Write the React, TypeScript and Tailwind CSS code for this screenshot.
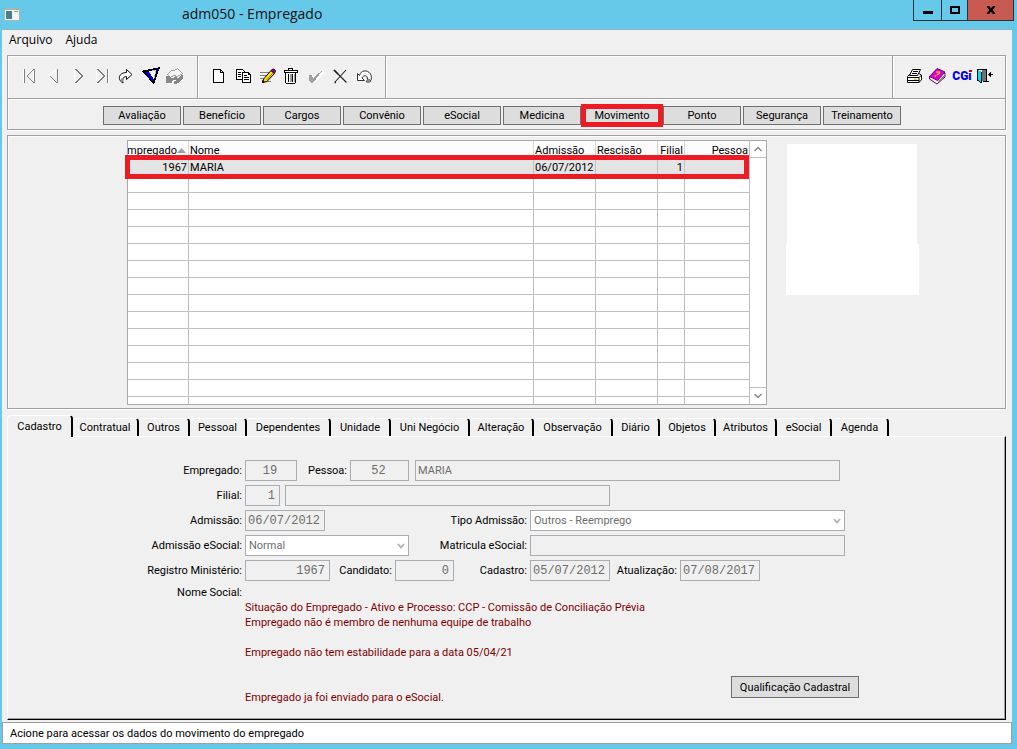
import { useId, type ReactNode } from "react";

const etched = "border border-[#a0a0a0] shadow-[1px_1px_0_#fff,inset_1px_1px_0_#fff]";

function ToolButton({ label, children }: { label: string; children: ReactNode }) {
  return (
    <button type="button" aria-label={label} className="relative flex h-6 w-6 items-center justify-center">
      {children}
    </button>
  );
}

function Glyph({ children }: { children: ReactNode }) {
  return (
    <svg viewBox="0 0 24 24" className="h-6 w-6" fill="none" shapeRendering="crispEdges" aria-hidden="true">
      {children}
    </svg>
  );
}

const navigation: { label: string; art: ReactNode }[] = [
  {
    label: "Primeiro",
    art: (
      <>
        <path d="M6.5 5v14M16.5 5l-7 7" stroke="#fff" />
        <path d="M7.5 5v14M17.5 5v14M10 12l7 7M17 5l-7 7" stroke="#808080" />
        <path d="M16.5 7v10" stroke="#fff" />
      </>
    ),
  },
  {
    label: "Anterior",
    art: (
      <>
        <path d="M15.5 5l-7 7" stroke="#fff" strokeWidth="2" />
        <path d="M16.5 5v14M9 12l7 7" stroke="#808080" />
      </>
    ),
  },
  {
    label: "Próximo",
    art: (
      <>
        <path d="M9.5 6v12l7-6" stroke="#fff" />
        <path d="M10.5 5l7 7-7 7" stroke="#808080" />
      </>
    ),
  },
  {
    label: "Último",
    art: (
      <>
        <path d="M7.5 6v12l7-6M19.5 5v14" stroke="#fff" />
        <path d="M8.5 5l7 7-7 7M18.5 5v14" stroke="#808080" />
      </>
    ),
  },
  {
    label: "Repetir",
    art: (
      <g shapeRendering="auto">
        <path d="M13.500 5.500l5.500 5-5.500 5v-3c-3 0-4.500 2-3.500 6.500-6-3-4.500-10.500 3.500-10.500z" fill="#fff" stroke="#111" />
        <path d="M8 14.500h2v3H8z" fill="#909090" />
      </g>
    ),
  },
  {
    label: "Filtrar",
    art: (
      <>
        <path d="M6.5 7.5l15-3-5 14z" fill="#fff" stroke="#000" strokeWidth="2" />
        <path d="M8 8h4l4 6v4z" fill="#0000e0" />
        <path d="M12 8.5h2M15 6.5h3M18.5 7v3M17.5 11v3" stroke="#a8b8c8" />
        <path d="M19 4h3v3h-3z" fill="#000080" />
      </>
    ),
  },
  {
    label: "Limpar filtro",
    art: (
      <>
        <path d="M6.500 10.500l4-4h3l3-2 5 5-5 3-4-1-3 2z" fill="#f6f6f6" stroke="#a0a0a0" />
        <path d="M5 12h3l3 2 3-1 3 1 3-3h2v4l-6 5h-3v-3h-2v2H5z" fill="#888" />
        <path d="M12 16.500h3M6 19.500h6M16 20.500l6-5" stroke="#fff" />
      </>
    ),
  },
];

const editing: { label: string; art: ReactNode }[] = [
  {
    label: "Novo",
    art: <path d="M7.5 5.5h7l3 3v10h-10zM14.5 5.5v3h3" fill="#fff" stroke="#000" />,
  },
  {
    label: "Copiar",
    art: (
      <>
        <path d="M6.5 5.5h6l2 2v8h-8z" fill="#fff" stroke="#000" />
        <path d="M8 8.5h3M8 10.5h3M8 12.5h3" stroke="#000" />
        <path d="M12.5 8.5h6l2 2v8h-8zM18.5 8.5v2h2" fill="#fff" stroke="#000" />
        <path d="M14 11.5h3M14 13.5h5M14 15.5h5" stroke="#000" />
      </>
    ),
  },
  {
    label: "Editar",
    art: (
      <>
        <path d="M6 8.5h10M6 11.5h8M6 14.5h5M8 17.5h9" stroke="#808080" />
        <g shapeRendering="auto">
          <path d="M8.500 18.500l1.500-4 7-8 3.500 3-7.500 8z" fill="#ffe000" stroke="#000" />
          <path d="M12.500 16l6-6.500" stroke="#808000" />
          <path d="M17 6.500l1.500-1.500h1.500l1.500 1.500v1.500L20 9.500z" fill="#900090" stroke="#000" strokeWidth="0.700" />
          <path d="M8 19v-3l3 2z" fill="#000" />
        </g>
      </>
    ),
  },
  {
    label: "Excluir",
    art: (
      <>
        <path d="M10.5 5.5v-1h4v1M6.5 6.5h13v2h-13z" fill="#fff" stroke="#000" />
        <path d="M7.5 8.5h10v10l-1 1h-8l-1-1z" fill="#fff" stroke="#000" />
        <path d="M10.5 10v8M14.5 10v8" stroke="#000" />
        <path d="M12 10h2v8h-2zM16 10h1v8h-1z" fill="#999" />
      </>
    ),
  },
  {
    label: "Confirmar",
    art: (
      <>
        <path d="M8 14l4 6 10-11V7z" fill="#fff" />
        <path d="M7 11h3l1 3 6-5 3-2-9 12H9l-2-3z" fill="#a0a0a0" />
      </>
    ),
  },
  {
    label: "Cancelar",
    art: (
      <g shapeRendering="auto">
        <path d="M8 6l12.500 12.500M20 6L9 18" stroke="#222" strokeWidth="1.100" />
        <path d="M8 6l4 4M8.500 18.500h1.500" stroke="#222" strokeWidth="1.600" />
      </g>
    ),
  },
  {
    label: "Desfazer",
    art: (
      <g shapeRendering="auto">
        <path d="M7.500 9.500v7h7l-2.500-2.500c1.500-3.500 6-3 5.500 1.500l-1 2.500h3.500c4-6-1-12-6-11-2 .3-3.500 1.500-4.500 4.500z" fill="#fff" stroke="#333" />
        <path d="M18 15h2v3h-2z" fill="#888" />
      </g>
    ),
  },
];

const system: { label: string; art: ReactNode }[] = [
  {
    label: "Imprimir",
    art: (
      <g shapeRendering="auto">
        <path d="M5.500 12.500l3-3h8.500l2.500 1.500v5l-3 2.500h-11z" fill="#fff" stroke="#000" />
        <path d="M10.500 5.500h8l-3 6h-8z" fill="#fff" stroke="#000" />
        <path d="M11 7.500h5M10 9.500h5" stroke="#000" />
        <path d="M6 13.500h11v5M6 16.500h11M17 13.500l2.500-2.500" stroke="#000" />
        <path d="M12 14.500h3v1.200h-3z" fill="#e0c000" />
      </g>
    ),
  },
  {
    label: "Ajuda",
    art: (
      <g shapeRendering="auto">
        <path d="M3.500 12.500v2.500l7.500 5 8-7V9z" fill="#fff" stroke="#600060" />
        <path d="M3.500 12.500l7.500-8 8 3.500-7.500 8.500z" fill="#e000d0" stroke="#700070" />
        <path d="M12 17l6.500-6v2l-6.500 5z" fill="#707070" />
        <path d="M10 8h3.500v1.500l-3 1.500M8.500 12h1.500" stroke="#ffe600" strokeWidth="1.200" />
      </g>
    ),
  },
];

const shortcuts = [
  "Avaliação",
  "Benefício",
  "Cargos",
  "Convênio",
  "eSocial",
  "Medicina",
  "Movimento",
  "Ponto",
  "Segurança",
  "Treinamento",
];

const tabs = [
  { name: "Contratual", width: "w-[66px]" },
  { name: "Outros", width: "w-[51px]" },
  { name: "Pessoal", width: "w-[57px]" },
  { name: "Dependentes", width: "w-[84px]" },
  { name: "Unidade", width: "w-[60px]" },
  { name: "Uni Negócio", width: "w-[79px]" },
  { name: "Alteração", width: "w-[64px]" },
  { name: "Observação", width: "w-[79px]" },
  { name: "Diário", width: "w-[47px]" },
  { name: "Objetos", width: "w-[56px]" },
  { name: "Atributos", width: "w-[61px]" },
  { name: "eSocial", width: "w-[55px]" },
  { name: "Agenda", width: "w-[57px]" },
];

function Field({
  label,
  labelWidth,
  width,
  value,
  align = "",
}: {
  label: string;
  labelWidth: string;
  width: string;
  value: string;
  align?: string;
}) {
  const id = useId();
  return (
    <div className="flex items-center gap-[3px]">
      <label htmlFor={id} className={`${labelWidth} whitespace-nowrap text-right`}>
        {label}
      </label>
      <input
        id={id}
        disabled
        defaultValue={value}
        className={`h-[21px] border border-[#abadb3] bg-[#f0f0f0] pl-[2px] pr-[4px] font-['Liberation_Mono',monospace] text-[12px] text-[#6d6d6d] ${width} ${align}`}
      />
    </div>
  );
}

function Choice({ label, labelWidth, width, value }: { label: string; labelWidth: string; width: string; value: string }) {
  const id = useId();
  return (
    <div className="flex items-center gap-[3px]">
      <label htmlFor={id} className={`${labelWidth} whitespace-nowrap text-right`}>
        {label}
      </label>
      <div className={`relative ${width}`}>
        <select
          id={id}
          disabled
          className="block h-[21px] w-full appearance-none border border-[#abadb3] bg-white px-[3px] text-[#6d6d6d] opacity-100"
        >
          <option>{value}</option>
        </select>
        <svg viewBox="0 0 8 6" className="pointer-events-none absolute right-1 top-2 h-[6px] w-2" fill="none" aria-hidden="true">
          <path d="M1 1l3 3.500L7 1" stroke="#b4b4b4" strokeWidth="1.800" />
        </svg>
      </div>
    </div>
  );
}

function Chevron({ d }: { d: string }) {
  return (
    <svg viewBox="0 0 8 6" className="h-[6px] w-2" fill="none" aria-hidden="true">
      <path d={d} stroke="#808080" strokeWidth="1.300" />
    </svg>
  );
}

const cell = "h-[17px] border-b border-r border-[#c0c0c0] p-0 last:border-r-0";
const head = "h-[18px] border-b border-r border-[#d8d8d8] bg-[#fcfcfc] p-0 pt-px font-normal last:border-r-0";

export default function App() {
  return (
    <div className="flex min-h-screen flex-col bg-[#66c9ea] pb-[5px] font-[Roboto,'Liberation_Sans',sans-serif] text-[11px] leading-[15px] text-black">
      <header className="flex h-[29px] items-start justify-between pl-1 pr-[3px]">
        <div className="flex h-7 items-center">
          <svg viewBox="0 0 16 13" className="h-[13px] w-4" aria-hidden="true">
            <path d="M0 0h16v13H0z" fill="#a8b4b8" />
            <path d="M1 2h14v10H1z" fill="#f4f6f6" />
            <path d="M2 3h6v8H2z" fill="#3d8a78" />
            <path d="M5 3h3v8H5z" fill="#4d78a0" />
            <path d="M10 3h4v1h-4zM12 1h2v1h-2z" fill="#78b868" />
          </svg>
          <h1 className="ml-[162px] font-['Open_Sans','Noto_Sans',sans-serif] text-[14px] leading-5 text-[#111]">adm050 - Empregado</h1>
        </div>
        <div className="flex h-[21px] border-x border-b border-[#28343a]">
          <button type="button" aria-label="Minimizar" className="flex w-[27px] items-center justify-center pt-1">
            <span className="h-[3px] w-[10px] bg-black" />
          </button>
          <button type="button" aria-label="Maximizar" className="flex w-[26px] items-center justify-center border-l border-[#28343a]">
            <span className="h-2 w-[10px] border-2 border-black" />
          </button>
          <button type="button" aria-label="Fechar" className="flex w-[46px] items-center justify-center border-l border-[#28343a] bg-[#c75b51]">
            <svg viewBox="0 0 10 8" className="h-2 w-[10px]" aria-hidden="true">
              <path d="M1.500 0l7 8M8.500 0l-7 8" stroke="#000" strokeWidth="2.400" />
            </svg>
          </button>
        </div>
      </header>

      <div className="ml-[2px] mr-[5px] flex flex-1 flex-col border-t border-[#8fb4c4] bg-[#f0f0f0]">
        <nav className="flex h-[25px] items-start gap-[13px] pl-[7px] pt-[2px] font-['Open_Sans','Noto_Sans',sans-serif] text-[12px] leading-4">
          <button type="button">Arquivo</button>
          <button type="button">Ajuda</button>
        </nav>

        <main className="ml-[5px] mr-[6px] flex flex-1 flex-col">
          <div className={`flex h-11 ${etched}`}>
            <div className="flex w-[190px] items-center border-r border-[#a0a0a0] pb-[2px] pl-[9px] shadow-[1px_0_0_#fff]">
              {navigation.map((item) => (
                <ToolButton key={item.label} label={item.label}>
                  <Glyph>{item.art}</Glyph>
                </ToolButton>
              ))}
            </div>
            <div className="flex w-[188px] items-center border-r border-[#a0a0a0] pb-[2px] pl-2 shadow-[1px_0_0_#fff]">
              {editing.map((item) => (
                <ToolButton key={item.label} label={item.label}>
                  <Glyph>{item.art}</Glyph>
                </ToolButton>
              ))}
            </div>
            <div className="ml-auto flex w-[113px] items-center border-l border-[#a0a0a0] pb-[2px] pl-[9px] shadow-[inset_1px_0_0_#fff]">
              {system.map((item) => (
                <ToolButton key={item.label} label={item.label}>
                  <Glyph>{item.art}</Glyph>
                </ToolButton>
              ))}
              <ToolButton label="CGi">
                <span className="font-[Roboto,'Liberation_Sans',sans-serif] text-[12px] font-black text-[#0000f0]">CGi</span>
                <span className="absolute right-[2px] top-[6px] h-[2px] w-[3px] bg-[#e00000]" />
              </ToolButton>
              <ToolButton label="Sair">
                <Glyph>
                  <path d="M3.5 17V5.5h9V17" fill="#fff" stroke="#000" />
                  <path d="M8 6h4v11H8z" fill="#707070" />
                  <path d="M4 6l4 2v11l-4-3z" fill="#00e0f0" />
                  <path d="M7.500 8v11M4 16.500h1M5 17.500h1M6 18.500h2M9 17.500h6" stroke="#000" />
                  <path d="M14 10h5v1h-5zM16 8h1v5h-1zM15 9h1v3h-1z" fill="#000" />
                </Glyph>
              </ToolButton>
            </div>
          </div>

          <div className={`-mt-px flex h-8 items-start gap-[2px] pl-[95px] pt-[7px] ${etched}`}>
            {shortcuts.map((name) => (
              <button
                key={name}
                type="button"
                className="relative h-[19px] w-[78px] border border-[#707070] bg-[#dddddd] pt-px text-center leading-4"
              >
                {name}
                {name === "Movimento" && (
                  <span className="pointer-events-none absolute -inset-[3px] z-10 border-[5px] border-[#ed1c24]" />
                )}
              </button>
            ))}
          </div>

          <section className={`mt-[5px] flex h-[274px] items-start pl-[119px] pt-1 ${etched}`}>
            <div className="relative flex h-[265px] border border-[#a8a8b0] bg-white">
              <div className="overflow-hidden">
                <table className="w-[621px] table-fixed border-separate border-spacing-0">
                  <colgroup>
                    <col className="w-[61px]" />
                    <col className="w-[345px]" />
                    <col className="w-[62px]" />
                    <col className="w-[62px]" />
                    <col className="w-[27px]" />
                    <col className="w-[64px]" />
                  </colgroup>
                  <thead>
                    <tr>
                      <th scope="col" className={head}>
                        <span className="flex items-center justify-end pr-[2px]">
                          mpregado
                          <svg viewBox="0 0 9 5" className="h-[5px] w-[9px] shrink-0" aria-hidden="true">
                            <path d="M0 5l4.500-5L9 5z" fill="#a0a0a0" />
                          </svg>
                        </span>
                      </th>
                      <th scope="col" className={`${head} text-left`}><span className="pl-px">Nome</span></th>
                      <th scope="col" className={`${head} text-left`}><span className="pl-px">Admissão</span></th>
                      <th scope="col" className={`${head} text-left`}><span className="pl-px">Rescisão</span></th>
                      <th scope="col" className={`${head} text-right`}><span className="pr-px">Filial</span></th>
                      <th scope="col" className={`${head} text-right`}><span className="pr-px">Pessoa</span></th>
                    </tr>
                  </thead>
                  <tbody>
                    <tr className="bg-[#e4e4e4]">
                      <td className={`${cell} text-right`}><span className="pr-px">1967</span></td>
                      <td className={cell}><span className="pl-px">MARIA</span></td>
                      <td className={cell}><span className="pl-px">06/07/2012</span></td>
                      <td className={cell} />
                      <td className={`${cell} text-right`}><span className="pr-px">1</span></td>
                      <td className={cell} />
                    </tr>
                    {Array.from({ length: 14 }, (_, row) => (
                      <tr key={row}>
                        {Array.from({ length: 6 }, (_, column) => (
                          <td key={column} className={cell} />
                        ))}
                      </tr>
                    ))}
                  </tbody>
                </table>
              </div>
              <div className="flex w-[17px] flex-col justify-between border-l border-[#c0c0c0]">
                <button type="button" aria-label="Rolar para cima" className="flex h-[17px] items-center justify-center border-b border-[#c0c0c0]">
                  <Chevron d="M0.500 5L4 1.500 7.500 5" />
                </button>
                <button type="button" aria-label="Rolar para baixo" className="flex h-[17px] items-center justify-center border-t border-[#c0c0c0]">
                  <Chevron d="M0.500 1L4 4.500 7.500 1" />
                </button>
              </div>
              <span className="pointer-events-none absolute -left-[3px] right-[17px] top-[14px] h-6 border-[5px] border-[#ed1c24]" />
            </div>
            <div className="ml-[19px] mt-1">
              <div className="ml-px h-[100px] w-[130px] bg-white" />
              <div className="h-[51px] w-[133px] bg-white" />
            </div>
          </section>

          <div className="mt-[6px] flex h-[21px] items-end" role="tablist">
            <button
              type="button"
              role="tab"
              aria-selected="true"
              className="relative z-10 -mb-px h-[22px] w-[66px] rounded-t-sm border-l border-r-2 border-t border-b-0 border-l-white border-r-black border-t-white bg-[#f0f0f0]"
            >
              Cadastro
            </button>
            {tabs.map((tab) => (
              <button
                key={tab.name}
                type="button"
                role="tab"
                aria-selected="false"
                className={`h-[18px] whitespace-nowrap rounded-t-sm border-r-2 border-t border-r-black border-t-white pt-px text-center leading-4 ${tab.width}`}
              >
                {tab.name}
              </button>
            ))}
          </div>

          <section className="mb-[2px] flex-1 border-b border-l border-r border-t border-b-black border-l-white border-r-black border-t-white pt-[23px] shadow-[inset_-1px_-1px_0_#a0a0a0]">
            <form className="flex flex-col gap-1">
              <div className="flex items-center">
                <Field label="Empregado:" labelWidth="w-[234px]" width="w-[52px]" value="19" align="text-center" />
                <Field label="Pessoa:" labelWidth="w-[50px]" width="w-[59px]" value="52" align="text-center" />
                <input
                  aria-label="Nome"
                  disabled
                  defaultValue="MARIA"
                  className="ml-[6px] h-[21px] w-[425px] border border-[#abadb3] bg-[#f0f0f0] px-[2px] text-[#6d6d6d]"
                />
              </div>
              <div className="flex items-center">
                <Field label="Filial:" labelWidth="w-[234px]" width="w-[35px]" value="1" align="text-right" />
                <input
                  aria-label="Nome da filial"
                  disabled
                  className="ml-[5px] h-[21px] w-[325px] border border-[#abadb3] bg-[#f0f0f0] px-[2px]"
                />
              </div>
              <div className="flex items-center">
                <Field label="Admissão:" labelWidth="w-[234px]" width="w-20" value="06/07/2012" />
                <Choice label="Tipo Admissão:" labelWidth="w-[202px]" width="w-[315px]" value="Outros - Reemprego" />
              </div>
              <div className="flex items-center">
                <Choice label="Admissão eSocial:" labelWidth="w-[234px]" width="w-[164px]" value="Normal" />
                <Field label="Matricula eSocial:" labelWidth="w-[118px]" width="w-[315px]" value="" />
              </div>
              <div className="flex items-center">
                <Field label="Registro Ministério:" labelWidth="w-[234px]" width="w-[85px]" value="1967" align="text-right" />
                <Field label="Candidato:" labelWidth="w-[62px]" width="w-[59px]" value="0" align="text-right" />
                <Field label="Cadastro:" labelWidth="w-[73px]" width="w-20" value="05/07/2012" />
                <Field label="Atualização:" labelWidth="w-[67px]" width="w-20" value="07/08/2017" />
              </div>
              <p className="w-[234px] text-right">Nome Social:</p>
            </form>
            <div className="flex pl-[237px]">
              <div className="w-[486px] text-[#800000]">
                <p>Situação do Empregado - Ativo e Processo: CCP - Comissão de Conciliação Prévia</p>
                <p>Empregado não é membro de nenhuma equipe de trabalho</p>
                <p className="mt-[15px]">Empregado não tem estabilidade para a data 05/04/21</p>
                <p className="mt-[30px]">Empregado ja foi enviado para o eSocial.</p>
              </div>
              <button type="button" className="mt-[76px] h-[22px] w-32 border border-[#707070] bg-[#dddddd]">
                Qualificação Cadastral
              </button>
            </div>
          </section>
        </main>

        <footer className="flex h-[22px] items-center border border-[#a0a0a0] bg-white pl-[7px]">
          Acione para acessar os dados do movimento do empregado
        </footer>
      </div>
    </div>
  );
}
